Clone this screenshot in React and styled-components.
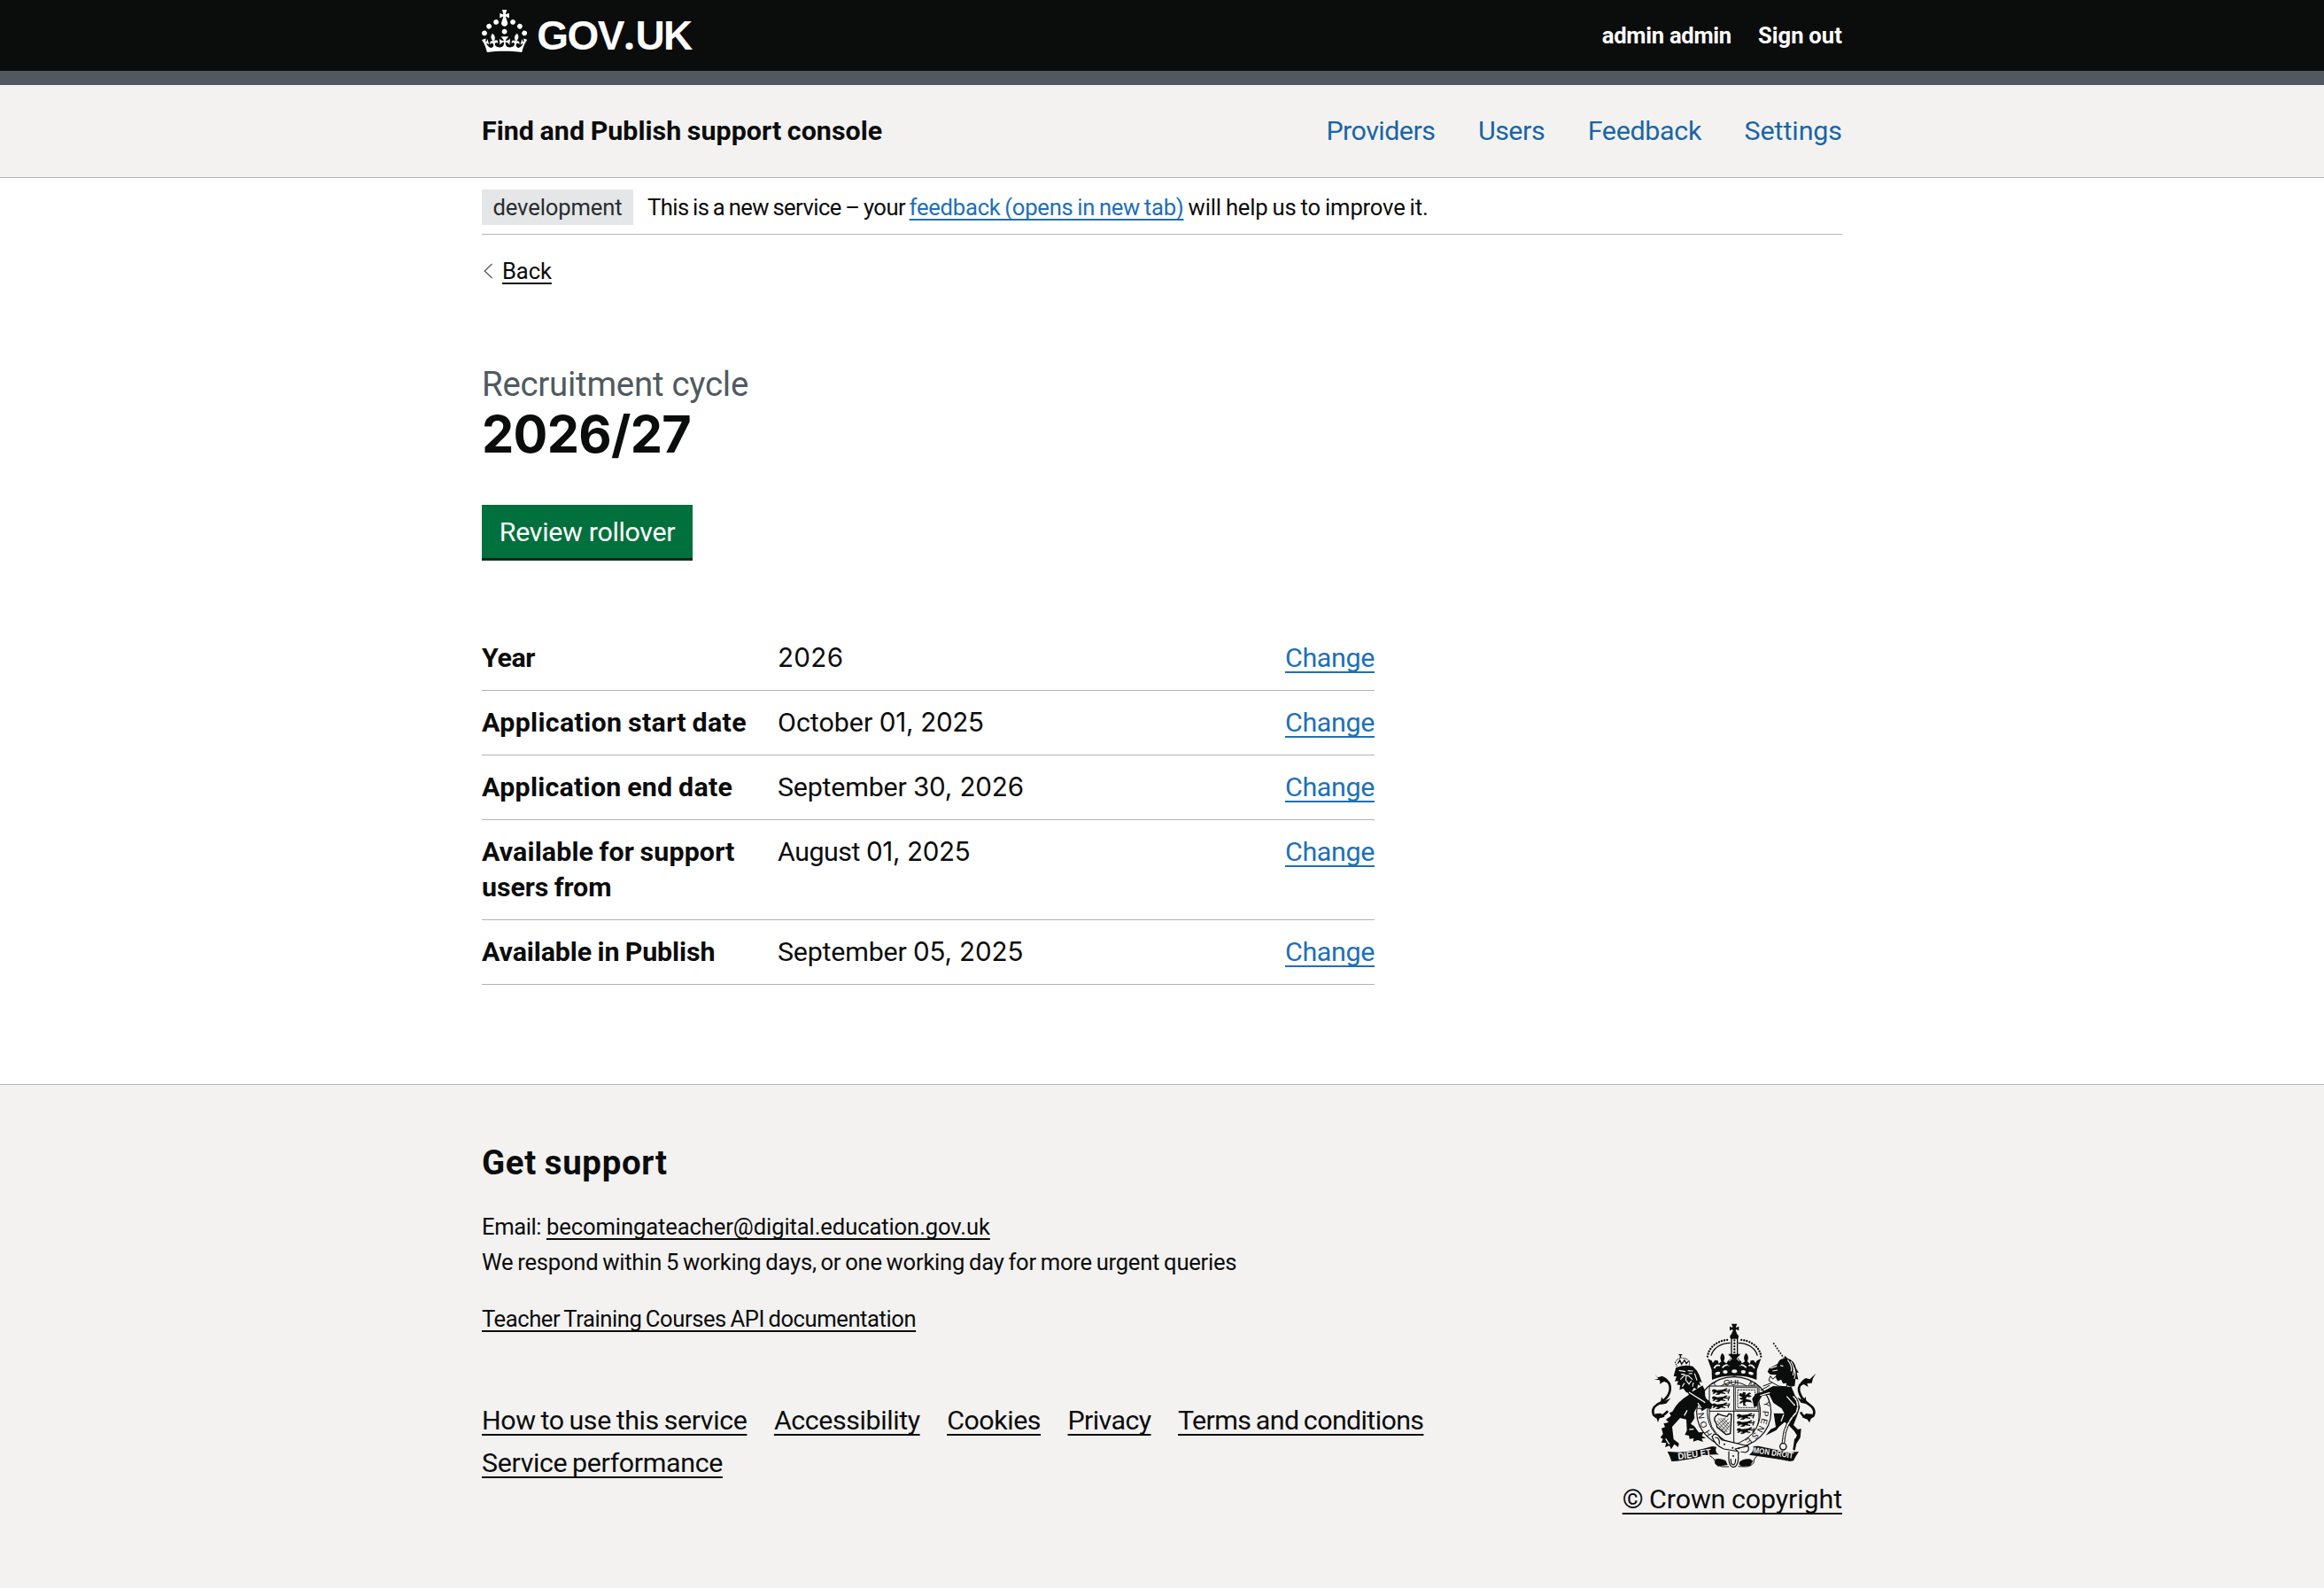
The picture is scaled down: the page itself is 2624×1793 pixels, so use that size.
import React from "react";
import styled, { createGlobalStyle, css } from "styled-components";

const color = {
  text: "#0b0c0c",
  secondary: "#505a5f",
  link: "#1d70b8",
  navLink: "#1a65a6",
  border: "#b1b4b6",
  panel: "#f3f2f1",
  green: "#00703c",
};
const sans = `Roboto, "Liberation Sans", sans-serif`;
const wide = `Inter, "Liberation Sans", sans-serif`;

const GlobalStyle = createGlobalStyle`
  *, *::before, *::after { box-sizing: border-box; }
  body {
    margin: 0;
    background: #fff;
    color: ${color.text};
    font-family: ${sans};
    font-size: 30.4px;
    line-height: 40px;
  }
  h1, h2, p, ul, dl, dt, dd { margin: 0; padding: 0; }
  ul { list-style: none; }
`;

const tracking = css`
  letter-spacing: ${(p) => p.$track || 0}px;
  word-spacing: ${(p) => p.$word || 0}px;
`;

const Page = styled.div`
  display: flex;
  flex-direction: column;
  min-height: 1793px;
`;
const Container = styled.div`
  width: 1536px;
  margin: 0 auto;
`;

/* Header */
const Header = styled.header`
  background: ${color.text};
  height: 96px;
  border-bottom: 16px solid #52585f;
`;
const HeaderRow = styled(Container)`
  display: flex;
  justify-content: space-between;
  height: 80px;
`;
const Logo = styled.a`
  display: flex;
  align-items: flex-start;
  gap: 11px;
  padding-top: 11px;
  color: #fff;
`;
const LogoText = styled.span`
  font: 700 46px/48px "Liberation Sans", Arial, sans-serif;
  padding-top: 4px;
  letter-spacing: -1.5px;
  white-space: nowrap;
`;
const LogoDot = styled.span`
  font-family: "Noto Sans", sans-serif;
  line-height: 1;
  margin: 0 2px 0 0;
`;
const AccountNav = styled.nav`
  display: flex;
  align-items: center;
  gap: 30px;
  color: #fff;
  font-size: 25.6px;
  font-weight: 700;
`;
const AccountLink = styled.a`
  ${tracking}
`;

/* Service navigation */
const ServiceNav = styled.section`
  background: ${color.panel};
  border-bottom: 1px solid ${color.border};
`;
const ServiceRow = styled(Container)`
  display: flex;
  justify-content: space-between;
  align-items: center;
  height: 104px;
`;
const ServiceName = styled.span`
  font-weight: 700;
  ${tracking}
`;
const NavList = styled.ul`
  display: flex;
  gap: 48.5px;
`;
const NavLink = styled.a`
  color: ${color.navLink};
  ${tracking}
`;

/* Phase banner and back link */
const PhaseBanner = styled.div`
  display: flex;
  align-items: center;
  gap: 16px;
  padding: 13px 0 10px;
  border-bottom: 1px solid ${color.border};
  font-size: 25.6px;
`;
const Tag = styled.strong`
  width: 171px;
  height: 40px;
  background: #e5e6e7;
  color: #282d30;
  font-weight: 400;
  text-align: center;
  ${tracking}
`;
const PhaseText = styled.p`
  white-space: pre;
`;
const Run = styled.span`
  ${tracking}
`;
const Link = styled.a`
  color: ${(p) => (p.$plain ? color.text : color.link)};
  text-decoration: underline;
  text-decoration-thickness: 2px;
  text-decoration-skip-ink: none;
  text-underline-offset: 0.1578em;
  ${tracking}
`;
const BackRow = styled.div`
  display: flex;
  align-items: center;
  gap: 11px;
  margin-top: 21px;
  font-size: 25.6px;
`;

/* Main content */
const Main = styled.main`
  padding: 84px 0 112px;
`;
const Caption = styled.span`
  display: block;
  color: ${color.secondary};
  font-size: 38.4px;
  line-height: 48px;
  ${tracking}
`;
const Title = styled.h1`
  font: 700 57.6px/60px ${wide};
  margin-top: 2px;
  letter-spacing: -0.7px;
`;
const Button = styled.button`
  display: block;
  margin: 50px 0 77px;
  width: 238px;
  height: 60px;
  padding: 1px 0 0;
  border: 0;
  background: ${color.green};
  box-shadow: 0 3px 0 #002d18;
  color: #fff;
  font: 400 30.4px/59px ${sans};
  text-align: center;
  ${tracking}
`;
const SummaryList = styled.dl`
  width: 1008px;
`;
const SummaryRow = styled.div`
  display: grid;
  grid-template-columns: 302px 1fr auto;
  column-gap: 32px;
  padding: 16px 0;
  border-bottom: 1px solid ${color.border};
`;
const Key = styled.dt`
  font-weight: 700;
`;
const KeyLine = styled.span`
  display: block;
  white-space: nowrap;
  ${tracking}
`;
const Value = styled.dd`
  white-space: pre;
`;
const Digits = styled.span`
  font-family: ${wide};
  font-size: 29.6px;
  line-height: 0;
  letter-spacing: ${(p) => p.$track}px;
`;

/* Footer */
const Footer = styled.footer`
  flex: 1;
  background: ${color.panel};
  border-top: 1px solid ${color.border};
`;
const FooterRow = styled(Container)`
  display: flex;
  justify-content: space-between;
  align-items: flex-end;
  padding-top: 64px;
`;
const Support = styled.div`
  width: 1110px;
  padding-bottom: 37px;
  font-size: 25.6px;
`;
const SupportTitle = styled.h2`
  font-size: 38.4px;
  line-height: 48px;
  margin-bottom: 28px;
  ${tracking}
`;
const SupportLine = styled.p`
  white-space: pre;
  margin-bottom: ${(p) => p.$after || 0}px;
`;
const FooterLinks = styled.ul`
  display: flex;
  flex-wrap: wrap;
  column-gap: 30.5px;
  font-size: 30.4px;
  line-height: 48px;
`;
const Copyright = styled.div`
  display: flex;
  flex-direction: column;
  align-items: center;
  gap: 16px;
  white-space: nowrap;
`;
const Arms = styled.svg`
  margin-left: 4px;
`;

function Crown() {
  return (
    <svg width="51.2" height="48" viewBox="0 0 32 30" fill="#fff">
      <path d="M22.6 10.4c-1 .4-2-.1-2.4-1-.4-.9.1-2 1-2.4.9-.4 2 .1 2.4 1s-.1 2-1 2.4m-5.9 6.7c-.9.4-2-.1-2.4-1-.4-.9.1-2 1-2.4.9-.4 2 .1 2.4 1s-.1 2-1 2.4m10.8-3.7c-1 .4-2-.1-2.4-1-.4-.9.1-2 1-2.4.9-.4 2 .1 2.4 1s0 2-1 2.4m3.3 4.8c-1 .4-2-.1-2.4-1-.4-.9.1-2 1-2.4.9-.4 2 .1 2.4 1s-.1 2-1 2.4M17 4.7l2.3 1.2V2.5l-2.3.7-.2-.2.9-3h-3.4l.9 3-.2.2c-.1.1-2.3-.7-2.3-.7v3.4L15 4.7c.1.1.1.2.2.2l-1.3 4c-.1.2-.1.4-.1.6 0 1.1.8 2 1.9 2.2h.7c1-.2 1.9-1.1 1.9-2.1 0-.2 0-.4-.1-.6l-1.3-4c-.1-.2 0-.2.1-.3m-7.6 5.7c.9.4 2-.1 2.4-1 .4-.9-.1-2-1-2.4-.9-.4-2 .1-2.4 1s0 2 1 2.4m-5 3c.9.4 2-.1 2.4-1 .4-.9-.1-2-1-2.4-.9-.4-2 .1-2.4 1s.1 2 1 2.4m-3.2 4.8c.9.4 2-.1 2.4-1 .4-.9-.1-2-1-2.4-.9-.4-2 .1-2.4 1s0 2 1 2.4m14.8 11c4.4 0 8.6.3 12.3.8 1.1-4.5 2.4-7 3.7-8.8l-2.5-.9c.2 1.3.3 1.9 0 2.7-.4-.4-.8-1.1-1.1-2.3l-1.2 4c.7-.5 1.3-.8 2-.9-1.1 2.5-2.6 3.1-3.5 3-1.1-.2-1.7-1.2-1.5-2.1.3-1.2 1.5-1.5 2.1-.1 1.1-2.3-.8-3-2-2.3 1.9-1.9 2.1-3.5.6-5.6-2.1 1.6-2.1 3.2-1.2 5.5-1.2-1.4-3.2-.6-2.5 1.6.9-1.4 2.1-.5 1.9.8-.2 1.1-1.7 2.1-3.5 1.9-2.7-.2-2.9-2.1-2.9-3.6.7-.1 1.9.5 2.9 1.9l.4-4.3c-1.1 1.1-2.1 1.4-3.2 1.4.4-1.2 2.1-3 2.1-3h-5.4s1.7 1.9 2.1 3c-1.1 0-2.1-.2-3.2-1.4l.4 4.3c1-1.4 2.2-2 2.9-1.9-.1 1.5-.2 3.4-2.9 3.6-1.9.2-3.4-.8-3.5-1.9-.2-1.3 1-2.2 1.9-.8.7-2.3-1.2-3-2.5-1.6.9-2.2.9-3.9-1.2-5.5-1.5 2-1.3 3.7.6 5.6-1.2-.7-3.1 0-2 2.3.6-1.4 1.8-1.1 2.1.1.2.9-.3 1.9-1.5 2.1-.9.2-2.4-.5-3.5-3 .6 0 1.2.3 2 .9l-1.2-4c-.3 1.1-.7 1.9-1.1 2.3-.3-.8-.2-1.4 0-2.7l-2.9.9C1.3 23 2.6 25.5 3.7 30c3.7-.5 7.9-.8 12.3-.8" />
    </svg>
  );
}

function BackChevron() {
  return (
    <svg width="12" height="18" viewBox="0 0 12 18" fill="none" stroke={color.secondary} strokeWidth="1.3">
      <path d="M11.5 1 3.2 9l8.300 8" />
    </svg>
  );
}

/* Half of the crown: the other half is its mirror about x = 352.5 */
function CrownHalf() {
  return (
    <g>
      <path d="M262 153C265 121 298 96 337 96" fill="none" stroke={color.text} strokeWidth="7" strokeLinecap="round" strokeDasharray="0.1 9.3" />
      <path d="M274 150C281 124 307 107 339 107" fill="none" stroke={color.text} strokeWidth="4" />
      <path d="M262 160l14 7 4 8 7-10 10 2 3 10 8-7-3-12 2-9 5-8 6 8 2 9-3 12 9 6 5-8 9-1 3-6 10 4v54q-40-2-76 13l-1-33z" />
      <path d="M284 193q8-15 20-9M312 191q10-14 24-8" fill="none" stroke={color.panel} strokeWidth="5" />
      <ellipse cx="296" cy="210" rx="9" ry="5" fill={color.panel} transform="rotate(-18 296 210)" />
      <ellipse cx="322" cy="205" rx="8" ry="6" fill={color.panel} />
    </g>
  );
}

function Passants({ x, y }) {
  return (
    <g transform={`translate(${x} ${y})`}>
      {[0, 24, 48].map((dy) => (
        <path
          key={dy}
          transform={`translate(0 ${dy})`}
          d="M3 5q6-5 11-1l5 2 20-2 9-4q7-1 6 3l-8 3 12 1-1 4-15-1-4 3 10 3-1 3-15-2-6 4-11 1v-3l8-3-8-2-6 4H3l5-6-6-1zM58 1l5 3-5 14-4-2q6-6 4-15z"
        />
      ))}
    </g>
  );
}

function RoyalArms() {
  return (
    <Arms width="200" height="163" viewBox="52 40 600 489" fill={color.text}>
      {/* Crown */}
      <path d="M343 42h19l-4 10 1 3 9-4v14l-9-4-2 3 5 13q7 4 5 12l-3 4h-23l-3-4q-2-8 5-12l5-13-2-3-9 4V51l9 4 1-3z" />
      <path d="M343 91v54M363 91v54" stroke={color.text} strokeWidth="4" />
      <path d="M353 98v44" stroke={color.text} strokeWidth="7" strokeLinecap="round" strokeDasharray="0.1 10" />
      <CrownHalf />
      <g transform="translate(705 0) scale(-1 1)"><CrownHalf /></g>
      <path d="M332 144h41l-8 15 10 10v14H330v-14l11-10z" />
      <path d="M335 150l9 11-9 7M370 150l-9 11 9 7" fill="none" stroke={color.panel} strokeWidth="3" />
      <ellipse cx="353" cy="203" rx="9" ry="6" fill={color.panel} />

      {/* Garter */}
      <ellipse cx="351" cy="341" rx="126" ry="119" fill={color.panel} stroke={color.text} strokeWidth="3.500" />
      <ellipse cx="351" cy="341" rx="90" ry="101" fill="none" stroke={color.text} strokeWidth="3" />
      <g fontFamily="Liberation Sans, sans-serif" fontSize="29" textAnchor="middle">
        <text x="342" y="250">QUI</text>
        <text transform="translate(292 259) rotate(-28)">T</text>
        <text transform="translate(408 257) rotate(26)">M</text>
        <text transform="translate(254 298) rotate(-60)">S</text>
        <text transform="translate(246 330) rotate(-84)">I</text>
        <text transform="translate(250 352) rotate(-98)">N</text>
        <text transform="translate(258 380) rotate(-108)">O</text>
        <text transform="translate(272 408) rotate(-122)">H</text>
        <text transform="translate(452 316) rotate(82)">Y</text>
        <text transform="translate(448 346) rotate(94)">P</text>
        <text transform="translate(444 370) rotate(106)">E</text>
        <text transform="translate(433 394) rotate(118)">N</text>
        <text transform="translate(416 415) rotate(132)">S</text>
        <text transform="translate(396 432) rotate(146)">E</text>
      </g>

      {/* Shield */}
      <path d="M268 253h168v108q-4 61-84 91-78-30-84-91z" fill={color.panel} stroke={color.text} strokeWidth="3" />
      <Passants x={275} y={261} />
      <path d="M356 258h75v76h-75z" fill="none" stroke={color.text} strokeWidth="2.500" />
      <path d="M364 266h59v60h-59z" fill="none" stroke={color.text} strokeWidth="2.500" strokeDasharray="7 2" />
      <path d="M372 276l8 3 2-6 9 2-1 9 13-9 7 3-8 5 10 4-9 4-8-2-3 8 15 3 6 9-9-2-12-1-4 8 7 6-12-1-1-11-12 6 2-8 11-6-12-2 1-5 9-1-6-4-7-3z" />
      <path d="M351 253v198M268 338h168" stroke={color.text} strokeWidth="3" />
      <path d="M297 350q-14 6-11 20 8 10 8 22l31 25 14-3 4-65-9-2-6 9q-16-3-31-9z" fill="none" stroke={color.text} strokeWidth="4" />
      <path d="M298 362l36 40M294 370l35 39M306 361l28 31M314 361l21 22M293 380l28 30M333 363l-33 34M336 374l-27 30M324 360l-26 24M337 386l-18 24" stroke={color.text} strokeWidth="2" />
      <Passants x={359} y={345} />

      {/* Strap and buckle */}
      <path d="M278 424q6-13 18-5l14 16 89 21q8 17-9 22l-73-12q-30-12-40-42z" fill={color.panel} stroke={color.text} strokeWidth="3.500" />
      <path d="M287 427q17-1 15 23" fill="none" stroke={color.text} strokeWidth="3.500" />
      <path d="M398 456l-42 10 13 14M334 474v28q2 24 15 26 15-2 17-27v-22" fill={color.panel} stroke={color.text} strokeWidth="3.500" />
      <circle cx="319" cy="450" r="3" /><circle cx="347" cy="462" r="3" /><circle cx="368" cy="464" r="3" />
      <circle cx="349" cy="490" r="3" />
      <path d="M341 500q-1 19 8 20 8-1 8-20" fill="none" stroke={color.text} strokeWidth="3.500" />

      {/* Motto scroll */}
      <path d="M126 475l38 2q55-2 114-20l14 2q-7 18 9 26-45-2-85 13l-59 9-17 1q-6-19-14-33z" />
      <path d="M571 475l-33 3-104-22-17 1q4 16-14 29l93 14 46 8 11-2q8-17 18-31z" />
      <path d="M287 501q13-6 36 4l7 15-33 5-9-9zM371 509q14-12 35-9l10 7-10 16-28 2-10-7z" />
      <path d="M269 489q18 8 20 27l22 10h23M430 488q-14 14-12 25-9 13-30 13l-22-1" fill="none" stroke={color.text} strokeWidth="3" />
      <g fill={color.panel} fontFamily="Liberation Sans, sans-serif" fontWeight="700">
        <text transform="translate(163 502) rotate(-8)" textLength="113" lengthAdjust="spacingAndGlyphs" fontSize="31">DIEU ET</text>
        <text transform="translate(416 479) rotate(8)" textLength="136" lengthAdjust="spacingAndGlyphs" fontSize="28">MON DROIT</text>
      </g>

      {/* Lion */}
      <path d="M158 187l-6-15 8-10 13-5 16 3 12 9-1 15" fill="none" stroke={color.text} strokeWidth="3" strokeDasharray="4 2" />
      <path d="M164 147h12M170 146v12M161 177l7-12 6 14 10-14 6 12 8-9" fill="none" stroke={color.text} strokeWidth="4" />
      <path d="M155 191q24-12 57-5l14 15 8 15 9 25-9-3 4 15-9-5-2 16-11-5-9 14-17 2-10-14-13 5 2-16-11-2 5-12-12 1 6-16-10-2z" />
      <path d="M165 200l22 4M195 201l18 1M172 213h12M198 211l12-1M170 231l14-15 13 2 14 13M190 218l-2 14 11 14 8-11M184 243l-8 12M218 210l8 24M214 241l-3 14" fill="none" stroke={color.panel} strokeWidth="3.500" />
      <path d="M183 258l29 13 33-20 8 16 1 25 25 23-5 16-14-4-17 11-13-21-14 26 2 19-13 19 12 8 15 21 16-1-5 13 13 7-14 2 5 11-18-6-16 5 2-11-14 2-2-11-14-3 7-14-2-38-21-5-27 30 3 26 2 16 18 14-2 13-14-10-10 17-6-12-15 5 4-14-17-2 6-12-9-5 9-11-5-20 12-4-5-12 17-4-9-10 17-12-5-10 10-5q16-33 56-57z" />
      <path d="M199 274l55 35M183 353l10-18M120 431l12 19M200 400l15-1M229 310l12 18" stroke={color.panel} strokeWidth="4" fill="none" />
      <path d="M125 340Q96 371 79 350 71 329 91 316 138 292 135 255 132 231 103 233" fill="none" stroke={color.text} strokeWidth="8" strokeLinecap="round" />
      <path d="M82 211l11 13 15-5q18 5 28 26l-21-8-15 9 2-13-21-2 14-3zM102 316l4-26 9 13 22-9-15 18zM84 347l10 29 5-14 18-5-13-12z" />

      {/* Unicorn */}
      <path d="M485 107l35 51" stroke={color.text} strokeWidth="5" strokeDasharray="5 5" />
      <path d="M524 150l9 9q24 7 29 35l9 14-7-1 5 24-9-3-3 25-15 2-55-25 8-15-20-1-10-9 6-13 28-14q6-19 22-18z" />
      <path d="M474 193l23-8M482 202l17-3M509 183l9 3M533 164q17 21 12 39M544 169q15 22 7 48M554 190q9 24 1 38" stroke={color.panel} strokeWidth="3.500" fill="none" />
      <path d="M475 219l8 10 10-8 7 14 12-6 6 14 13-2-1 15-28-3-33-19z" fill={color.panel} stroke={color.text} strokeWidth="3" />
      <path d="M450 253l30-11M441 268l31-17" stroke={color.text} strokeWidth="3" />
      <path d="M484 253l62 3 14 33 15 35-10 30-12 31 15 15 11-3-3 31-13 20-5 23-7-3 5-34 9-14-9-14-20-21-19-15 7-21-11-20-28-19-14-28-24 4-15 23q-1 18-13 14l-6-27 12-17 24-7z" />
      <path d="M486 345l43 1 10 16-35 29-9 11-36 18 17-21 17-7z" />
      <path d="M440 285l33-10M530 288l28 31M520 349l-9 23M548 414l13 14" stroke={color.panel} strokeWidth="4" fill="none" />
      <path d="M553 289q22 20 10 53-30 32-40 69l-5 37" fill="none" stroke={color.text} strokeWidth="11" strokeDasharray="15 5" strokeLinecap="round" />
      <path d="M553 289q22 20 10 53-30 32-40 69l-5 37" fill="none" stroke={color.panel} strokeWidth="5" strokeDasharray="15 5" strokeLinecap="round" />
      <circle cx="518" cy="458" r="11" fill={color.panel} stroke={color.text} strokeWidth="4" />
      <path d="M579 344q17 29 41 10 10-20-11-36-38-25-38-58 5-22 31-25" fill="none" stroke={color.text} strokeWidth="8" strokeLinecap="round" />
      <path d="M629 210l-10 17-4 16-16 1 4 12-15-9-16 8q6-21 23-29l13 4zM598 314l-4-25-9 12-19-10 12 18zM618 348l-11 29-8-13-17-5 13-13z" />
    </Arms>
  );
}

const accountLinks = [
  { label: "admin admin", track: -0.28, word: 0 },
  { label: "Sign out", track: 0.1, word: -1 },
];
const navLinks = [
  { label: "Providers", track: -0.52 },
  { label: "Users", track: -0.45 },
  { label: "Feedback", track: -0.3 },
  { label: "Settings", track: -0.06 },
];
const rows = [
  { key: [["Year", -0.4]], month: "", digits: "2026", digitTrack: 0.3 },
  { key: [["Application start date", 0.32, -1.2]], month: "October ", monthTrack: 0, digits: "01, 2025", digitTrack: -0.3 },
  { key: [["Application end date", 0.25, -1.2]], month: "September ", monthTrack: -0.2, digits: "30, 2026", digitTrack: -0.15 },
  { key: [["Available for support", 0.12, -1.2], ["users from", -0.1, -1]], month: "August ", monthTrack: -0.5, digits: "01, 2025", digitTrack: -0.35 },
  { key: [["Available in Publish", -0.1, -1.1]], month: "September ", monthTrack: -0.2, digits: "05, 2025", digitTrack: -0.15 },
];
const footerLinks = [
  { label: "How to use this service", track: -0.4, word: -1.3 },
  { label: "Accessibility", track: -0.41 },
  { label: "Cookies", track: -0.45 },
  { label: "Privacy", track: -0.6 },
  { label: "Terms and conditions", track: -0.61, word: -1.5 },
  { label: "Service performance", track: -0.36, word: -1.5 },
];

export default function App() {
  return (
    <Page>
      <GlobalStyle />
      <Header>
        <HeaderRow>
          <Logo>
            <Crown />
            <LogoText>GOV<LogoDot>.</LogoDot>UK</LogoText>
          </Logo>
          <AccountNav>
            {accountLinks.map((l) => (
              <AccountLink key={l.label} $track={l.track} $word={l.word}>{l.label}</AccountLink>
            ))}
          </AccountNav>
        </HeaderRow>
      </Header>

      <ServiceNav>
        <ServiceRow>
          <ServiceName $word={-1} $track={0.03}>Find and Publish support console</ServiceName>
          <NavList>
            {navLinks.map((l) => (
              <li key={l.label}><NavLink $track={l.track}>{l.label}</NavLink></li>
            ))}
          </NavList>
        </ServiceRow>
      </ServiceNav>

      <Container>
        <PhaseBanner>
          <Tag $track={-0.12}>development</Tag>
          <PhaseText>
            <Run $track={-0.56} $word={-1.3}>{"This is a new service – your "}</Run>
            <Link $track={-0.23} $word={-1.4}>feedback (opens in new tab)</Link>
            <Run $track={-0.17} $word={-1.1}>{" will help us to improve it."}</Run>
          </PhaseText>
        </PhaseBanner>
        <BackRow>
          <BackChevron />
          <Link $plain $track={-0.1}>Back</Link>
        </BackRow>
        <Main>
          <Caption $track={-0.25}>Recruitment cycle</Caption>
          <Title>2026/27</Title>
          <Button $track={-0.33}>Review rollover</Button>
          <SummaryList>
            {rows.map((r) => (
              <SummaryRow key={r.key[0][0]}>
                <Key>
                  {r.key.map(([line, track, word]) => (
                    <KeyLine key={line} $track={track} $word={word}>{line}</KeyLine>
                  ))}
                </Key>
                <Value>
                  <Run $track={r.monthTrack}>{r.month}</Run>
                  <Digits $track={r.digitTrack}>{r.digits}</Digits>
                </Value>
                <dd><Link $track={-0.34}>Change</Link></dd>
              </SummaryRow>
            ))}
          </SummaryList>
        </Main>
      </Container>

      <Footer>
        <FooterRow>
          <Support>
            <SupportTitle $track={0.7} $word={-1.5}>Get support</SupportTitle>
            <SupportLine>
              <Run $track={-0.42}>{"Email: "}</Run>
              <Link $plain $track={-0.11}>becomingateacher@digital.education.gov.uk</Link>
            </SupportLine>
            <SupportLine $after={24}>
              <Run $track={-0.23} $word={-1.3}>We respond within 5 working days, or one working day for more urgent queries</Run>
            </SupportLine>
            <SupportLine $after={71}>
              <Link $plain $track={-0.43} $word={-1.4}>Teacher Training Courses API documentation</Link>
            </SupportLine>
            <FooterLinks>
              {footerLinks.map((l) => (
                <li key={l.label}><Link $plain $track={l.track} $word={l.word}>{l.label}</Link></li>
              ))}
            </FooterLinks>
          </Support>
          <Copyright>
            <RoyalArms />
            <Link $plain $track={-0.1} $word={-0.8}>© Crown copyright</Link>
          </Copyright>
        </FooterRow>
      </Footer>
    </Page>
  );
}
